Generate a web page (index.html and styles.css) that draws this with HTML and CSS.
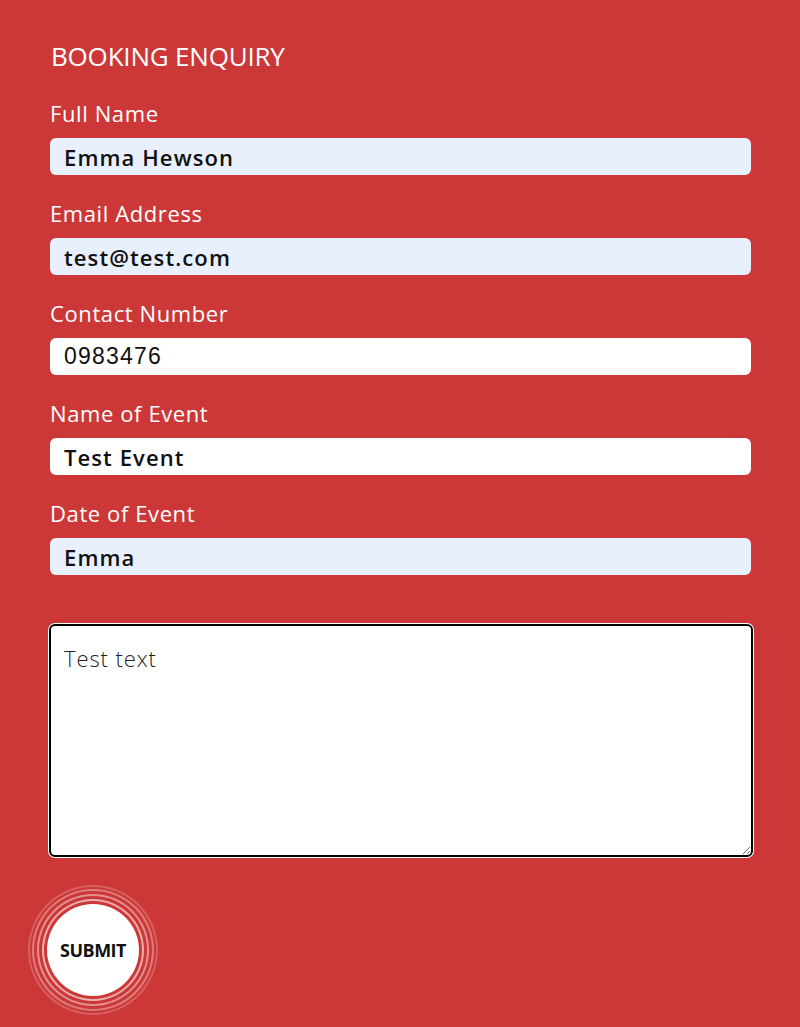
FILE: index.html
```
<!DOCTYPE html>
<html>
<head>
<meta charset="utf-8">
<link rel="stylesheet" href="styles.css">
</head>
<body>
<form class="form">
  <h1 class="title">BOOKING ENQUIRY</h1>
  <div class="field">
    <label class="label">Full Name</label>
    <input class="input autofill" type="text" value="Emma Hewson">
  </div>
  <div class="field">
    <label class="label">Email Address</label>
    <input class="input autofill" type="text" value="test@test.com">
  </div>
  <div class="field">
    <label class="label">Contact Number</label>
    <input class="input system" type="text" value="0983476">
  </div>
  <div class="field">
    <label class="label">Name of Event</label>
    <input class="input" type="text" value="Test Event">
  </div>
  <div class="field">
    <label class="label">Date of Event</label>
    <input class="input autofill" type="text" value="Emma">
  </div>
  <div class="area-wrap">
    <textarea class="area">Test text</textarea>
  </div>
  <div class="submit-wrap">
    <button class="submit" type="button">SUBMIT</button>
  </div>
</form>
</body>
</html>
```
FILE: styles.css
```
html, body {
  margin: 0;
  padding: 0;
  background: #cc3838;
  height: 100%;
}
.form {
  padding: 38px 49px 0 50px;
  display: flex;
  flex-direction: column;
}
.title {
  margin: 0 0 26px 1px;
  font-family: "Open Sans", sans-serif;
  font-weight: 400;
  font-size: 26px;
  line-height: 36px;
  color: #fff;
  letter-spacing: -0.2px;
}
.field {
  display: flex;
  flex-direction: column;
  gap: 12px;
  margin-bottom: 25px;
}
.label {
  font-family: "Open Sans", sans-serif;
  font-size: 22px;
  line-height: 26px;
  height: 26px;
  color: #fff;
  letter-spacing: 0.6px;
}
.input {
  box-sizing: border-box;
  width: 100%;
  height: 37px;
  border: none;
  border-radius: 6px;
  background: #fff;
  padding: 0 14px;
  font-family: "Open Sans", sans-serif;
  font-weight: 600;
  font-size: 22px;
  letter-spacing: 1.1px;
  color: #111;
  outline: none;
}
.input.autofill { background: #e8f0fe; }
.input.system {
  font-family: "Liberation Sans", sans-serif;
  font-weight: 400;
  font-size: 23px;
  letter-spacing: 1.2px;
}
.area-wrap {
  margin: 24px -2px 0 -1px;
  display: flex;
}
.area {
  box-sizing: border-box;
  width: 100%;
  height: 233px;
  border: 2px solid #000;
  border-radius: 6px;
  background: #fff;
  padding: 17px 13px;
  font-family: "Open Sans", sans-serif;
  font-weight: 300;
  font-size: 22px;
  letter-spacing: 0.9px;
  color: #222;
  outline: none;
  box-shadow: 0 0 0 1px #fff;
}
.submit-wrap {
  margin: 47px 0 0 -3px;
}
.submit {
  width: 92px;
  height: 92px;
  border-radius: 50%;
  border: none;
  background: #fff;
  font-family: "Open Sans", sans-serif;
  font-weight: 700;
  font-size: 18px;
  letter-spacing: -0.5px;
  color: #111;
  padding: 0;
  box-shadow:
    0 0 0 3px #cc3838,
    0 0 0 5px rgba(255,255,255,0.6),
    0 0 0 8px #cc3838,
    0 0 0 10px rgba(255,255,255,0.45),
    0 0 0 13px #cc3838,
    0 0 0 15px rgba(255,255,255,0.35),
    0 0 0 17px #cc3838,
    0 0 0 19px rgba(255,255,255,0.2);
}
```
